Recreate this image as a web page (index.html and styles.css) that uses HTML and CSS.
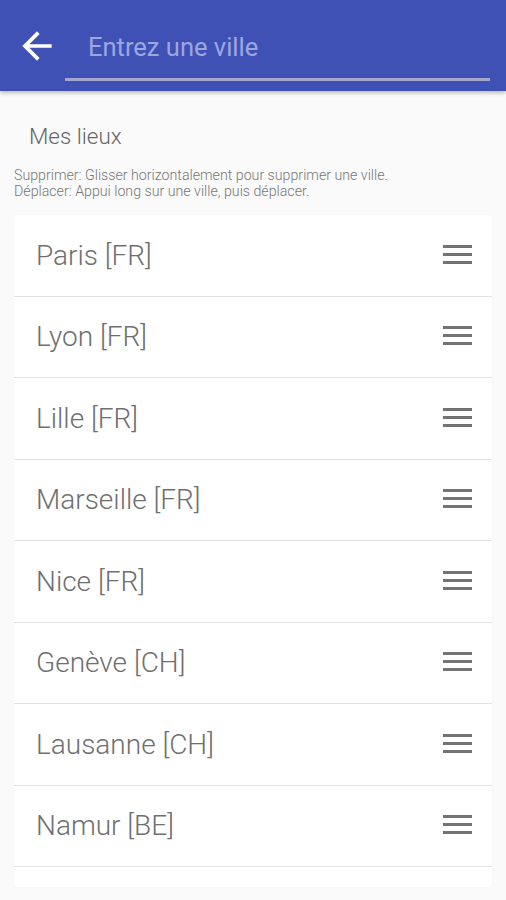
FILE: index.html
```html
<!doctype html>
<html lang="fr">
<head>
    <meta charset="UTF-8">
    <title>Mes lieux</title>
    <link rel="stylesheet" href="styles.css">
</head>
<body>
<div id="toolbar">
    <div class="back">
        <svg width="44" height="44" viewBox="0 0 24 24"><path d="M20 11H7.83l5.59-5.59L12 4l-8 8 8 8 1.41-1.41L7.83 13H20v-2z" fill="#ffffff"/></svg>
    </div>
    <div class="search">
        <input type="text" placeholder="Entrez une ville">
    </div>
</div>

<div id="content">
    <h2 class="title">Mes lieux</h2>
    <p class="hint">Supprimer: Glisser horizontalement pour supprimer une ville.<br>Déplacer: Appui long sur une ville, puis déplacer.</p>
    <ul id="places">
        <li><span>Paris [FR]</span><i class="handle"></i></li>
        <li><span>Lyon [FR]</span><i class="handle"></i></li>
        <li><span>Lille [FR]</span><i class="handle"></i></li>
        <li><span>Marseille [FR]</span><i class="handle"></i></li>
        <li><span>Nice [FR]</span><i class="handle"></i></li>
        <li><span>Genève [CH]</span><i class="handle"></i></li>
        <li><span>Lausanne [CH]</span><i class="handle"></i></li>
        <li><span>Namur [BE]</span><i class="handle"></i></li>
    </ul>
</div>
</body>
</html>
```

FILE: styles.css
```css
*{
    padding: 0;
    margin: 0;
    box-sizing: border-box;
}
body{
    background: #fafafa;
    font-family: Roboto, "Liberation Sans", sans-serif;
    width: 506px;
    height: 900px;
    overflow: hidden;
}
li{
    list-style: none;
}
#toolbar{
    height: 91px;
    background: #3f51b5;
    display: flex;
    align-items: flex-start;
    box-shadow: 0 2px 4px rgba(0,0,0,0.25);
    position: relative;
}
#toolbar .back{
    width: 65px;
    padding: 24px 0 0 15px;
}
#toolbar .back svg{
    display: block;
}
#toolbar .search{
    flex: 1;
    margin: 24px 16px 0 0;
    border-bottom: 3px solid #a3a7cf;
    height: 57px;
}
#toolbar input{
    width: 100%;
    background: transparent;
    border: 0;
    outline: none;
    font-family: Roboto, "Liberation Sans", sans-serif;
    font-size: 25.5px;
    color: #fff;
    padding: 4px 0 0 23px;
    height: 42px;
}
#toolbar input::placeholder{
    color: #9ca6e0;
}
#content{
    padding: 0 14px;
}
.title{
    font-weight: 300;
    font-size: 22.4px;
    color: #666;
    padding: 23px 0 0 15px;
    line-height: 44px;
}
.hint{
    font-size: 14.2px;
    font-weight: 300;
    color: #777;
    line-height: 16px;
    margin-top: 9px;
}
#places{
    margin-top: 16px;
    background: #fff;
    border-radius: 3px;
    box-shadow: 0 0 1px rgba(0,0,0,0.08);
    padding-bottom: 20px;
}
#places li{
    height: 81.5px;
    border-bottom: 1px solid #e2e2e2;
    display: flex;
    align-items: center;
    justify-content: space-between;
    padding: 0 20px 0 22px;
}
#places span{
    font-size: 28px;
    font-weight: 300;
    color: #6f6f6f;
}
.handle{
    width: 29px;
    height: 19px;
    border-top: 3px solid #737373;
    border-bottom: 3px solid #737373;
    position: relative;
    margin-top: -2px;
}
.handle:after{
    content: "";
    position: absolute;
    left: 0;
    right: 0;
    top: 5px;
    height: 3px;
    background: #737373;
}
```
